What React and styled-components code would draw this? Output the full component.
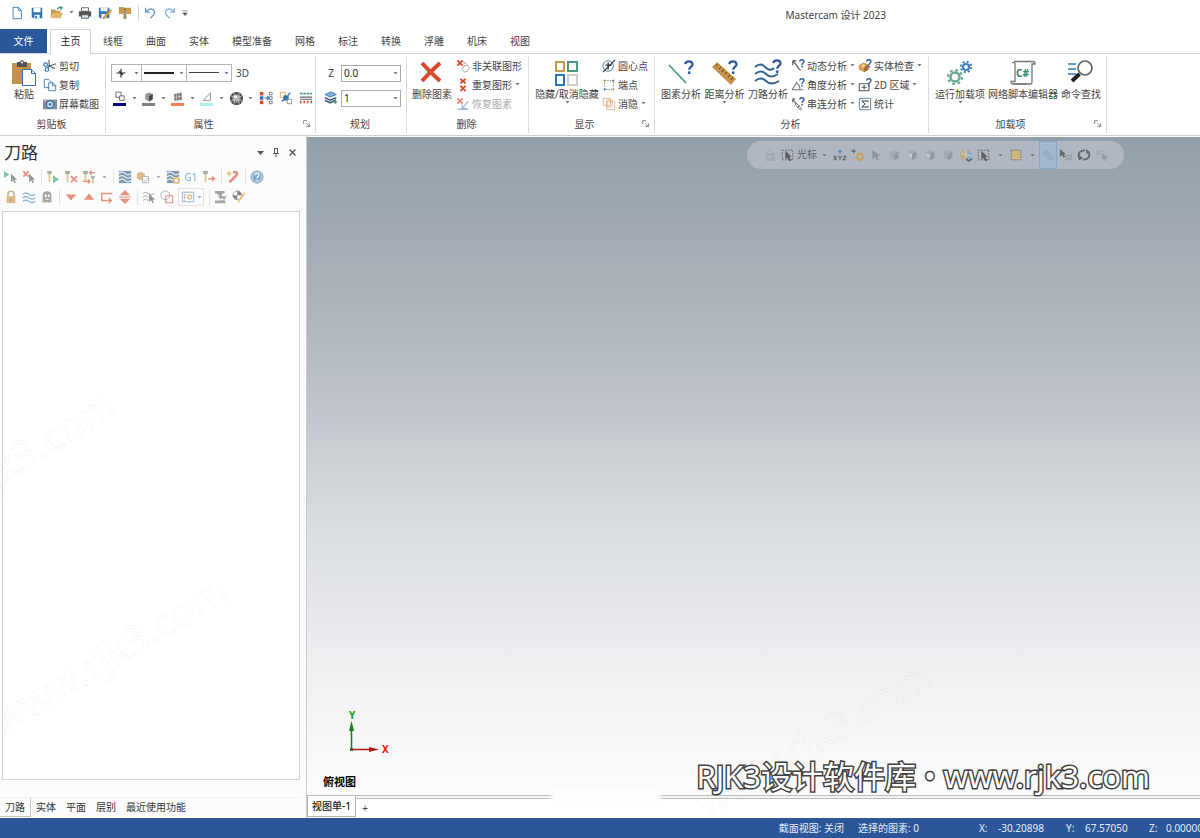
import React from 'react';
import styled, { createGlobalStyle } from 'styled-components';


const GlobalStyle = createGlobalStyle`
	* { box-sizing: border-box; }

	body {
		margin: 0;
		background: #fff;
		color: #444;
		font: 10px/14px "Noto Sans", "Noto Sans CJK SC", sans-serif;
	}

	button, select {
		font: inherit;
		color: inherit;
		margin: 0;
		padding: 0;
		border: 0;
		background: none;
	}
`;

const Page = styled.div`
	display: flex;
	flex-direction: column;
	height: 100vh;
	overflow: hidden;
	position: relative;
`;

const Svg = styled.svg`
	display: block;
	flex: none;
	width: ${p => p.$size}px;
	height: ${p => p.$size}px;
`;

const Separator = styled.span`
	flex: none;
	width: 1px;
	height: ${p => p.$tall || 16}px;
	margin: 0 ${p => p.$side || 2}px 0 3px;
	background: #d5d5d5;
`;

const ArrowBox = styled.span`
	flex: none;
	display: flex;
	align-items: center;
	justify-content: center;
	width: ${p => p.$width || 12}px;
`;

/* title bar */

const TitleBar = styled.header`
	flex: none;
	display: flex;
	align-items: center;
	height: 29px;
	padding: 0 314px 4px 7px;
`;

const QuickButton = styled.button`
	display: flex;
	align-items: center;
	justify-content: center;
	width: 20px;
	height: 20px;
`;

const Title = styled.h1`
	margin: 4px 0 0 auto;
	font-size: 10px;
	font-weight: 400;
	white-space: nowrap;
`;

/* ribbon */

const Tabs = styled.nav`
	flex: none;
	display: flex;
	height: 25px;
	border-bottom: 1px solid #d4d4d4;
`;

const FileTab = styled.button`
	width: 47px;
	margin-right: 3px;
	background: #2b579a;
	color: #fff;
`;

const HomeTab = styled.button`
	width: 41px;
	height: 25px;
	margin-right: 12px;
	padding-bottom: 2px;
	border: 1px solid #d4d4d4;
	border-bottom: 0;
	background: #fff;
	color: #222;
`;

const Tab = styled.button`
	margin-right: 23px;
	white-space: nowrap;
`;

const Ribbon = styled.section`
	flex: none;
	display: flex;
	height: 82px;
	border-bottom: 1px solid #d0d0d0;
`;

const GroupBox = styled.div`
	flex: none;
	display: flex;
	flex-direction: column;
	width: ${p => p.$width}px;
	margin: 2px 0;
	border-right: 1px solid #dcdcdc;
`;

const GroupBody = styled.div`
	display: flex;
	height: 61px;
	padding-left: ${p => p.$indent}px;
`;

const GroupFoot = styled.div`
	display: flex;
	align-items: center;
	padding-right: 2px;
`;

const GroupName = styled.span`
	flex: 1;
	text-align: center;
`;

const BigButton = styled.button`
	flex: none;
	display: flex;
	flex-direction: column;
	align-items: center;
	width: ${p => p.$width}px;
	padding-top: 3px;
	white-space: nowrap;
`;

const Column = styled.div`
	display: flex;
	flex-direction: column;
	align-items: flex-start;
	width: ${p => p.$width}px;
	padding-left: ${p => p.$indent || 0}px;
`;

const SmallButton = styled.button`
	display: flex;
	align-items: center;
	gap: 2px;
	height: 19px;
	color: ${p => (p.$faded ? '#aaa' : 'inherit')};
	white-space: nowrap;
`;

const AttributeGrid = styled.div`
	display: flex;
	flex-direction: column;
	gap: 7px;
	padding-top: 8px;
`;

const AttributeRow = styled.div`
	display: flex;
	align-items: center;
	height: 18px;
`;

const StyleButton = styled.button`
	display: flex;
	align-items: center;
	justify-content: space-between;
	width: ${p => p.$width}px;
	height: 18px;
	margin-right: -1px;
	padding-left: 2px;
	border: 1px solid #b5b5b5;
`;

const ThreeD = styled.button`
	margin-left: 5px;
`;

const SwatchButton = styled.button`
	display: flex;
	align-items: center;
	justify-content: flex-end;
	width: 29px;
`;

const Swatch = styled.span`
	display: flex;
	flex-direction: column;
	align-items: center;
	width: 13px;
	margin-right: 2px;

	&::after {
		content: '';
		width: 13px;
		height: 3px;
		background: ${p => p.$color};
	}
`;

const ToolButton = styled.button`
	display: flex;
	align-items: center;
	justify-content: center;
	width: 20px;
	height: 18px;
`;

const Field = styled.label`
	display: grid;
	grid-template-columns: 20px 60px;
	align-items: center;
	justify-items: center;
	height: 18px;
`;

const SelectWrap = styled.span`
	position: relative;
	width: 60px;
	height: 17px;
`;

const Select = styled.select`
	appearance: none;
	display: block;
	width: 100%;
	height: 17px;
	padding: 0 2px;
	border: 1px solid #ababab;
	border-radius: 0;
	background: #fff;
	color: #222;
	line-height: 14px;
`;

const SelectArrow = styled.span`
	position: absolute;
	top: 7px;
	right: 3px;
	display: flex;
	pointer-events: none;
`;

/* toolpath manager */

const Body = styled.main`
	flex: 1;
	display: flex;
	min-height: 0;
	background: #fcfcfc;
`;

const SidePanel = styled.aside`
	flex: none;
	display: flex;
	flex-direction: column;
	width: 307px;
	padding-top: 2px;
	border-right: 1px solid #c8ccd0;
`;

const PanelHeader = styled.div`
	display: flex;
	align-items: center;
	height: 29px;
	padding: 0 6px 0 4px;
`;

const PanelTitle = styled.h2`
	margin: 0 auto 0 0;
	color: #333;
	font-size: 17px;
	font-weight: 400;
	line-height: 24px;
`;

const PanelButton = styled.button`
	display: flex;
	align-items: center;
	justify-content: center;
	width: 16px;
	height: 16px;
`;

const IconRow = styled.div`
	display: flex;
	align-items: center;
	height: 20px;
	padding-left: 2px;
	opacity: 0.6;
`;

const IconButton = styled.button`
	flex: none;
	display: flex;
	align-items: center;
	justify-content: center;
	width: 18px;
	height: 18px;
	color: #2f75b5;
`;

const BoxedButton = styled.button`
	display: flex;
	align-items: center;
	width: 26px;
	height: 18px;
	margin: 0 2px;
	padding-left: 2px;
	border: 1px solid #d4d4d4;
`;

const Tree = styled.div`
	flex: 1;
	margin: 4px 6px 0 2px;
	border: 1px solid #d2d2d2;
	background: #fff;
`;

const PanelTabs = styled.nav`
	display: flex;
	height: 20px;
	margin: 17px 6px 1px 0;
	border-top: 1px solid #f0f0f0;
`;

const PanelTab = styled.button`
	padding: 0 5px;
	color: #333;
	border: solid ${p => (p.$active ? '#c4c4c4' : 'transparent')};
	border-width: 0 ${p => (p.$active ? 1 : 0)}px 1px 0;
`;

/* graphics view */

const Workspace = styled.section`
	flex: 1;
	display: flex;
	flex-direction: column;
	min-width: 0;
	position: relative;
`;

const Viewport = styled.div`
	flex: 1;
	position: relative;
	margin-top: 1px;
	background: linear-gradient(#939faa 0%, #abb2ba 24%, #bec3cc 40%, #cacfd3 48%, #dadde1 60%, #eeeff1 80%, #fcfcfc 100%);
`;

const SelectionBar = styled.div`
	position: absolute;
	top: 4px;
	right: 76px;
	display: flex;
	align-items: center;
	height: 28px;
	padding: 0 13px 0 14px;
	border-radius: 14px;
	background: #b0b7c0;
`;

const SelectionButton = styled.button`
	display: flex;
	align-items: center;
	justify-content: center;
	width: 18px;
	height: 28px;
	border: 1px solid ${p => (p.$active ? '#82a9cd' : 'transparent')};
	background: ${p => (p.$active ? '#a2b8cd' : 'none')};

	svg {
		opacity: ${p => p.$opacity || 0.6};
	}
`;

const CursorLabel = styled.span`
	margin-bottom: 2px;
	color: #59616a;
`;

const Gnomon = styled.div`
	position: absolute;
	left: 36px;
	bottom: 37px;
`;

const ViewName = styled.div`
	position: absolute;
	left: 16px;
	bottom: 6px;
	color: #000;
	font-size: 11px;
	font-weight: 700;
`;

const SheetBar = styled.nav`
	flex: none;
	display: flex;
	height: 23px;
	border-top: 1px solid #bdbdbd;
	background: linear-gradient(#f4f4f4 2px, #bdbdbd 2px, #bdbdbd 3px, #fff 3px);
`;

const SheetTab = styled.button`
	width: 49px;
	height: 21px;
	border: 1px solid #b5b5b5;
	border-top: 0;
	background: #fff;
	color: #222;
	font-weight: 500;
	white-space: nowrap;
`;

const AddSheet = styled.button`
	width: 18px;
	padding-top: 1px;
`;

const Smear = styled.div`
	position: absolute;
	left: 244px;
	bottom: 10px;
	width: 110px;
	height: 20px;
	border-radius: 4px;
	background: #fdfdfd;
	filter: blur(2px);
`;

const Credit = styled.div`
	position: absolute;
	right: 50px;
	bottom: 42px;
	color: #fff;
	font-size: 31px;
	line-height: 40px;
	white-space: nowrap;
	-webkit-text-stroke: 3px #414141;
	paint-order: stroke fill;
`;

const Ghost = styled.div`
	position: absolute;
	left: ${p => p.$left}px;
	top: ${p => p.$top}px;
	color: transparent;
	font-size: 40px;
	line-height: 48px;
	white-space: nowrap;
	-webkit-text-stroke: 1px rgba(120, 120, 120, 0.07);
	transform: rotate(-31deg);
	pointer-events: none;
`;

/* status bar */

const StatusBar = styled.footer`
	flex: none;
	display: flex;
	align-items: center;
	justify-content: flex-end;
	height: 20px;
	background: #2b579a;
	color: #e6ecf5;
	white-space: nowrap;
`;

const StatusItem = styled.span`
	margin-right: 14px;
`;

const Coordinate = styled.span`
	display: grid;
	grid-template-columns: ${p => p.$label || 19}px ${p => p.$width}px;
	margin-left: ${p => p.$gap}px;
`;


const blue = '#2f75b5';
const navy = '#2b579a';
const green = '#4a9b78';
const red = '#d9482b';
const gold = '#c79a4f';

const line = (color, width = 1) => ({ fill: 'none', stroke: color, strokeWidth: width });

const cursor = <path d="M8 4v10l2.400-2.200 1.600 3.400 1.600-.8-1.600-3.200H15z" fill="#555" />;
const smallX = <path d="M1.500 1.500l6 6M7.500 1.500l-6 6" {...line(red, 2)} />;
const waves = (color, y = 0) => (
	<path d={`M1 ${4 + y}q3.5-3 7 0t7 0M1 ${8 + y}q3.5-3 7 0t7 0M1 ${12 + y}q3.5-3 7 0t7 0`} {...line(color, 1.3)} />
);
const question = (x, y, s) => (
	<g transform={`translate(${x} ${y}) scale(${s})`}>
		<path d="M1 3.200Q1.200 1 3.800 1t2.800 2.300c0 1.800-2.600 2-2.600 4.200" {...line(navy, 1.7)} />
		<circle cx="4" cy="9.800" r="1.100" fill={navy} />
	</g>
);
const tool = (x = 0) => (
	<g transform={`translate(${x} 0)`}>
		<path d="M1 1h6L6 5H2z" fill="#777" />
		<path d="M4 5v9" {...line('#c9a544', 2)} />
	</g>
);
const gear = (x, y, r, color, width) => (
	<g>
		<circle cx={x} cy={y} r={r} {...line(color, width)} />
		<circle cx={x} cy={y} r={r + width} {...line(color, width * 0.9)} strokeDasharray={`${(r + width) * 0.393} ${(r + width) * 0.393}`} />
	</g>
);
const cube = (color, dark) => (
	<g>
		<path d="M3 4l5-2 5 2v7l-5 3-5-3z" fill={color} />
		<path d="M8 6.500l5-2.500v7l-5 3z" fill={dark} />
	</g>
);

const icons = {
	newFile: <path d="M3.500 1.500h6l3.500 3.500v9.500h-9.500zM9.500 1.500V5H13" fill="#fff" stroke={blue} />,
	save: <g><path d="M2 2h12v12H3.500L2 12.500z" fill={blue} /><path d="M4 2h8v5H4zM5 10h6v4H5z" fill="#fff" /><path d="M6 11h2v3H6z" fill={blue} /></g>,
	open: <g><path d="M1 4h5l1 1.500h5V8H4l-3 6z" fill={gold} /><path d="M4.500 8H15l-3 6H1.500z" fill="#e0b66d" /><path d="M8 4q2-3 5-2M11 .5l3 1.500-2 2.500" {...line(green, 1.5)} /></g>,
	print: <g><path d="M4 2h8v4H4z" fill="#fff" stroke="#555" /><path d="M1 6h14v6H1z" fill="#555" /><path d="M4 10h8v4H4z" fill="#d7e4f0" stroke="#555" /></g>,
	saveAs: <g><path d="M1 2h12v12H2.500L1 12.500z" fill={blue} /><path d="M3 2h8v4H3zM4 9h6v5H4z" fill="#fff" /><path d="M14 4l1.500 1.500-7 8-2.500 1 .8-2.600z" fill="#e4a33b" stroke="#8c6a30" strokeWidth=".6" /></g>,
	zip: <g><path d="M1 1h5l1 1h8v7H1z" fill={gold} /><path d="M6 6h4v9H6z" fill="#c9b78e" /><path d="M8 3v12" {...line('#555', 2)} strokeDasharray="1 1" /></g>,
	undo: <path d="M3 2v5h5M3.500 6.500Q8 1.500 12 4.500t-3.500 9.500" {...line('#6b9bd0', 1.6)} />,
	redo: <path d="M13 2v5H8M12.500 6.500Q8 1.500 4 4.500t3.500 9.500" {...line('#8bb4de', 1.6)} />,
	more: <path d="M4 4.500h8M4.500 8h7L8 12z" fill="#555" stroke="#555" />,
	paste: <g><path d="M2 4h19v21H2z" fill="#c3914a" /><path d="M7 3h3q.5-2 2-2t2 2h3v5H7z" fill="#555" /><circle cx="12" cy="3.500" r="1" fill="#fff" /><path d="M12.500 10.500h9l4 4v12h-13zM21.500 10.500v4h4" fill="#fff" stroke={blue} /></g>,
	cut: <g><path d="M6.500 1l1 7 6 3M15 5.500L7.500 8 5 10.500" {...line('#5c6670', 1.3)} /><circle cx="4.500" cy="12" r="2" {...line(blue, 1.3)} /><circle cx="3" cy="6.500" r="2" {...line(blue, 1.3)} /><path d="M5 7l3 1" {...line(blue)} /></g>,
	copy: <g fill="#fff" stroke={blue}><path d="M1.500 1.500h5l2.500 2.500v7H1.500z" /><path d="M6.500 5.500h5L14.500 8.500v6h-8zM11 5.500V9h3.500" /></g>,
	camera: <g><path d="M0 3h16v11H0z" fill="#858b91" /><path d="M1 4h3v1H1z" fill="#ddd" /><circle cx="8" cy="8.500" r="4" fill="#d8e6f3" stroke={blue} strokeWidth="1.500" /><circle cx="8" cy="8.500" r="1.600" fill={blue} /></g>,
	point: <path d="M8 3v10M3 8h10M6 6l4 4" {...line('#222', 1.3)} />,
	wireColor: <g fill="#fff" stroke="#444"><path d="M2.500 1.500h7v7h-7z" /><path d="M7.500 6.500h6v6h-6z" /></g>,
	solidColor: cube('#999', '#4a4a4a'),
	surfaceColor: <g><path d="M3 4l10-2v10l-10 1z" fill="#777" /><path d="M6 3.500v9M9.500 2.800v9.500M3 8.500L13 7" {...line('#ddd', .8)} /></g>,
	meshColor: <path d="M3 12.500L12.500 2.500v10z" {...line('#777')} />,
	material: <g><circle cx="8" cy="8" r="7" fill="#4b4b4b" /><circle cx="8" cy="8" r="4.500" fill="#999" /><path d="M2 5q6 4 12 0M2 11q6-4 12 0M5 2q3 6 0 12M11 2q-3 6 0 12" {...line('#ddd', .7)} /><circle cx="7" cy="6" r="1.800" fill="#eee" /></g>,
	setAll: <g><path d="M1 1h4v4H1z" fill={red} /><path d="M1 6h4v4H1z" fill={blue} /><path d="M1 11h4v4H1z" fill={red} /><path d="M6 8h5M9 5.500L11.500 8 9 10.500" {...line(blue, 1.3)} /><path d="M12 1.500h3v3h-3zM12 6.500h3v3h-3zM12 11.500h3v3h-3z" {...line('#777')} /></g>,
	setFrom: <g><path d="M1.500 1.500h6v6h-6z" {...line('#e3a24c')} /><path d="M5 5h6v6H5z" fill={blue} /><path d="M3 12l3-3M10 5l3-3" {...line(blue, 1.5)} /><path d="M9.500 9.500h5v5h-5z" fill="#fff" stroke="#888" /></g>,
	levels: <g><path d="M1 7h14M1 9.500h14" {...line('#666', 1.2)} /><path d="M1 3h14" {...line(green, 2)} strokeDasharray="3 1" /><path d="M2 11v3M6 11v3M10 11v3M14 11v3" {...line(red, 1.8)} /></g>,
	layers: <g><path d="M1 4l7-3 6 3-7 3z" fill="#86aed4" stroke={blue} /><path d="M1 7.500l6 3 7-3M1 10.500l6 3 6-3" {...line('#455f7b', 1.8)} /><path d="M13 7v7M11 12l2 2 2-2" {...line(green, 1.3)} /></g>,
	bigX: <path d="M4 4q8 9 18 18M22 4Q13 12 4 22" {...line(red, 4)} />,
	nonAssoc: <g>{smallX}<path d="M9 8l4-1 2 3-2 4-4 1-2-3z" {...line('#777')} strokeDasharray="2 1" /><path d="M8 3l4 3" {...line('#777')} /></g>,
	duplicates: <path d="M5 1l6 5M11 1L5 6M5 9l6 6M11 9l-6 6" {...line(red, 2)} />,
	restore: <g opacity=".65">{smallX}<path d="M14 5L7 13M7 8.500V13h5M2 14h12" {...line('#6994c5', 1.5)} /></g>,
	squares: <g fill="#fff" strokeWidth="2"><path d="M3 3h8v9H3z" stroke={gold} /><path d="M15 3h9v9h-9z" stroke={green} /><path d="M3 16h8v10H3z" stroke={blue} /><path d="M15 16h9v10h-9z" stroke="#c9ced3" /></g>,
	centerPoint: <g><circle cx="7" cy="8" r="6" {...line(blue)} /><path d="M1 15L15 1" {...line('#333', 1.4)} /><path d="M4 7h7M7 4v8" {...line('#333', 1.5)} /></g>,
	endPoints: <g><path d="M3 3h10v10H3z" {...line('#666')} strokeDasharray="1.500 1.500" /><path d="M2 2h2v2H2zM12 12h2v2h-2z" fill="#e38b2c" /><path d="M12 2h2v2h-2zM2 12h2v2H2z" fill={blue} /></g>,
	blank: <g {...line('#e2ae85')}><path d="M1.500 1.500h8v8h-8zM5.500 5.500h9v9h-9zM5.500 3.500h6v8h-6z" /></g>,
	lineQ: <g><path d="M2 6l17 18" {...line(green, 1.7)} />{question(17, 1, 1.3)}</g>,
	rulerQ: <g><path d="M1 8l5-5 19 17-5 6z" fill="#c3914a" /><path d="M7 5l-2 2M10 8l-2 2M13 10l-2 3M16 13l-2 2M19 16l-2 2M22 18l-2 3" {...line('#5f451e')} />{question(17, 1, 1.3)}</g>,
	wavesQ: <g><path d="M1 8q6-5 10 0 5 5 9 1M1 15q6-5 11 0t12 0M1 22q6-5 11 0t13 0" {...line('#33658f', 2)} />{question(18, 0, 1.3)}</g>,
	dynamicQ: <g><path d="M2 2l6 7M2 2v5M2 2h4M7 9l4 4" {...line('#666', 1.5)} />{question(9, 0, .9)}</g>,
	angleQ: <g><path d="M7 4L1.500 13.500H14M6 6q5 2 4 7" {...line('#777', 1.2)} />{question(9, 0, .9)}</g>,
	chainQ: <g><path d="M2 2l4 6M2 2v4M2 2h3" {...line('#666', 1.3)} /><path d="M6 7l3 3-1 2-3-3zM9 10l3 3-1 2-3-3z" {...line('#666', 1.1)} />{question(9, 0, .9)}</g>,
	solidQ: <g><path d="M1 7l5-3 6 2v6l-5 3-6-3z" fill="#d69a4b" /><path d="M7 9l5-3v6l-5 3z" fill="#a46e2d" /><circle cx="6" cy="8" r="2" fill="#f4d7a8" />{question(9, 0, .9)}</g>,
	areaQ: <g><path d="M1.500 6.500h11v8h-11zM4 10.500h6M7 8v5" {...line('#555', 1.2)} />{question(9, 0, .9)}</g>,
	sigma: <g><path d="M1.500 1.500h13v13h-13z" {...line('#4c7aa6')} /><path d="M11.500 6V4.500h-7L8 8l-3.500 3.500h7V10" {...line('#333', 1.1)} /></g>,
	gears: <g>{gear(9, 18, 4.500, '#67ab94', 2.5)}{gear(20, 8, 3, '#4380bd', 2.2)}</g>,
	script: <g><path d="M5 2.500h19q2 0 2 2.500h-3v18q0 2-2 2H4q-2 0-2-2.500h4V5Q6 2.500 3 4" fill="#fff" stroke="#777" strokeWidth="1.300" /><path d="M4 25h14" {...line('#777', 1.3)} /><text x="7" y="18" fill="#2e8464" fontSize="10" fontWeight="700">C#</text></g>,
	finder: <g><circle cx="18" cy="9" r="7" fill="#fff" stroke="#666" strokeWidth="1.700" /><path d="M12.500 15L5 22" {...line('#222', 4)} /><path d="M1 5h8M1 10h8M1 15h8" {...line(blue, 1.6)} /></g>,
	launcher: <path d="M3.500 8V3.500H8M7 7l4 4M11.500 7v4.500H7" {...line('#666')} />,

	runCursor: <g><path d="M0 1v8l6-4z" fill="#2f9c70" />{cursor}</g>,
	clearCursor: <g>{smallX}{cursor}</g>,
	toolRun: <g>{tool()}<path d="M8 6v9l7-4.500z" fill="#2f9c70" /></g>,
	toolX: <g>{tool()}<path d="M8 7l7 7M15 7l-7 7" {...line(red, 2)} /></g>,
	toolSwap: <g>{tool()}<path d="M8 3h7M11 .5L8.500 3 11 5.500M1 13h8M6.500 10.500L9 13l-2.500 2.500" {...line(red, 1.5)} /><path d="M10 7h5l-1 3h-3z" fill="#666" /><path d="M12.500 10v5" {...line('#c9a544', 2)} /></g>,
	waveBox: <g><path d="M1 1h14v14H1z" fill="#2c5877" />{waves('#d4e5ed')}</g>,
	solidBox: <g><path d="M1 4l4-2 5 2v6l-4 2-5-2z" fill="#cf8e40" /><path d="M7.500 7.500h7v7h-7zM9 11l2 2 3-4" fill="#fff" stroke="#777" /></g>,
	waveGear: <g><path d="M1 1h14v14H1z" fill="#2c5877" />{waves('#d4e5ed')}<circle cx="12" cy="12" r="3" fill="#fff" stroke="#df9b24" strokeWidth="2" /></g>,
	toolArrow: <g>{tool()}<path d="M7 10h7M11.500 7.500L14.500 10l-3 2.500" {...line(red, 1.5)} /></g>,
	wizard: <g><path d="M4 14l8-8q1.500-2-.5-3.500H8" {...line(red, 3)} /><path d="M3.500 1v6M.5 4h6" {...line('#df9b24', 1.8)} /></g>,
	help: <g><circle cx="8" cy="8" r="7" fill={blue} stroke="#5a7590" /><circle cx="8" cy="8" r="5.500" {...line('#dce8f4', .8)} /><path d="M5.800 6Q6 4 8 4t2.200 2C10.200 7.500 8 7.600 8 9.500M8 11v1.500" {...line('#fff', 1.4)} /></g>,
	lock: <g><path d="M4.500 8V5q0-3.500 3.500-3.500T11.500 5v3" {...line('#a68444', 1.8)} /><path d="M3 7h10v8H3z" fill="#cc9337" /><path d="M8 9v4" {...line('#704a16')} /></g>,
	waves: waves(blue, 1),
	ghost: <g><path d="M3 15V6q0-4.500 5-4.500T13 6v9l-2-2-1.500 2L8 13l-1.500 2L5 13z" fill="#6c6c6c" /><path d="M5.500 5h2v3h-2zM9 5h2v3H9zM6 10h4v1H6z" fill="#fff" /></g>,
	down: <path d="M2 5h12l-6 7z" fill={red} />,
	up: <path d="M2 11h12L8 4z" fill={red} />,
	insert: <path d="M14 4H2v8h10M10 9l3 3-3 3" {...line(red, 1.6)} />,
	split: <path d="M2 6h12L8 0zM2 10h12l-6 6zM1 7.500h14v1H1z" fill={red} />,
	waveCursor: <g><path d="M1 4q3-3 6 0t7 0M1 8q3-3 6 0M1 12q3-3 6 0" {...line('#527181')} />{cursor}</g>,
	boundary: <g><circle cx="6" cy="6" r="5" {...line('#777')} /><path d="M6.500 6.500h8v8h-8z" {...line(red, 1.2)} /></g>,
	listGear: <g><path d="M1.500 2.500h13v11h-13z" {...line(blue)} /><path d="M4 5v7" {...line('#333', 1.5)} strokeDasharray="1.500 1.500" /><circle cx="10" cy="8" r="2.200" {...line('#df9b24', 1.7)} /></g>,
	machine: <g><path d="M1 1h11v3H9v3h4v3H7L4 7h3L3 4H1zM1 12h12v3H1z" fill="#626a72" /><path d="M8 11l2 2 5-7" {...line('#777')} /></g>,
	target: <g><circle cx="6" cy="6" r="5" fill="#fff" stroke="#555" /><path d="M6 1a5 5 0 0 1 5 5H6zM6 11a5 5 0 0 1-5-5h5z" fill="#333" /><path d="M14.500 3.500L7 14" {...line('#df9b24', 2)} /></g>,

	padlock: <g><path d="M5 7V4.500Q5 2 8 2t3 2.500V7" {...line('#777')} /><path d="M3.500 7h9v7h-9z" fill="#999" stroke="#777" /><path d="M5 10h6" {...line('#ddd')} /></g>,
	boxCursor: <g><path d="M1.500 2.500h12v11h-12z" {...line('#333')} strokeDasharray="2 1" /><path d="M5 3v10l2.500-2 2 4 2-1-2-4H12z" fill="#222" /></g>,
	xyz: <g><path d="M8 1v6M5.500 4H10.500" {...line(blue, 1.5)} /><path d="M1 9l3 5M4 9l-3 5M6 9l2 2.500L10 9M8 11.500V14M11.500 9.500h3L11.500 13.500h3.500" {...line('#333', 1.2)} /></g>,
	plusGear: <g><path d="M3 1v5M.5 3.500h5" {...line('#333', 1.3)} /><circle cx="10" cy="10" r="3.500" {...line('#d59a25', 2.5)} /></g>,
	plainCursor: <path d="M4 2v11l3-3 2 4 2-1-2-4h4z" fill="#4a525c" />,
	paleCube: cube('#8d959e', '#5d656e'),
	paleFace: <g>{cube('#8d959e', '#5d656e')}<path d="M4 6l4 1.500v4L4 10z" fill="#eceff2" /></g>,
	globe: <g><circle cx="8" cy="8" r="6.500" fill="#78a7d2" /><path d="M8 1.500a6.500 6.500 0 0 0 0 13z" fill="#d6a551" /><path d="M8 2v12M3 6l10 3" {...line('#eee')} /><path d="M8 12l3 3 4-3" {...line('#333', 2)} /></g>,
	yellowBox: <path d="M2.500 2.500h11v11h-11z" fill="#e8b752" stroke="#444" strokeDasharray="2 1" />,
	twoSpheres: <g fill="#8ea1b4" stroke="#7890a7"><circle cx="6" cy="6" r="3.500" /><circle cx="11" cy="11" r="3" /></g>,
	verifyCursor: <g><path d="M1 1v9l2.500-2L5 11l2-1-1.500-3H8z" fill="#333" /><path d="M8 8.500h6v5H8zM9 11l2 1.500L15 7" {...line('#76917f')} /></g>,
	rotate: <g><path d="M3 12Q0 6 5 3.500l4-1M13 4q3 6-2 8.500l-4 1" {...line('#333', 2)} /><path d="M2 7v7l5-2zM10 1l4 3-3 3z" fill="#333" /></g>,
	undoCursor: <g><path d="M2 2v5h5M3 6q4-5 8-1" {...line('#777')} /><path d="M8 6v8l2-2 2 3 1.500-1L12 11h3z" fill="#5b636b" /></g>,
};

const Icon = ({ name, size = 14, box = 16 }) => (
	<Svg $size={size} viewBox={`0 0 ${box} ${box}`} aria-hidden="true">{icons[name]}</Svg>
);

const Triangle = () => (
	<svg width="5" height="3" viewBox="0 0 5 3" aria-hidden="true"><path d="M.5 0h4L2.500 2.500z" fill="#777" /></svg>
);

const Arrow = ({ width }) => <ArrowBox $width={width}><Triangle /></ArrowBox>;

const Big = ({ icon, label, width, menu }) => (
	<BigButton $width={width}>
		<Icon name={icon} size={28} box={28} />
		<span>{label}</span>
		{menu && <Arrow />}
	</BigButton>
);

const Small = ({ icon, label, menu, faded }) => (
	<SmallButton $faded={faded}>
		<Icon name={icon} />
		<span>{label}</span>
		{menu && <Arrow width={6} />}
	</SmallButton>
);

const Group = ({ name, width, indent, launcher, children }) => (
	<GroupBox $width={width}>
		<GroupBody $indent={indent}>{children}</GroupBody>
		<GroupFoot>
			<GroupName>{name}</GroupName>
			{launcher && <button aria-label={name}><Icon name="launcher" size={12} /></button>}
		</GroupFoot>
	</GroupBox>
);

const Combo = ({ label, name, value }) => (
	<Field>
		{label}
		<SelectWrap>
			<Select aria-label={name} defaultValue={value}><option>{value}</option></Select>
			<SelectArrow><Triangle /></SelectArrow>
		</SelectWrap>
	</Field>
);

const swatches = [
	['wireColor', '#000080', '线框颜色'],
	['solidColor', '#808080', '实体颜色'],
	['surfaceColor', '#ff7f50', '曲面颜色'],
	['meshColor', '#afeeee', '网格颜色'],
];

const tabs = ['线框', '曲面', '实体', '模型准备', '网格', '标注', '转换', '浮雕', '机床', '视图'];

// '|' is a separator, 'v' a menu arrow
const topIcons = ['runCursor', 'clearCursor', '|', 'toolRun', 'toolX', 'toolSwap', 'v', '|', 'waveBox', 'solidBox', 'v', 'waveGear', 'G1', 'toolArrow', '|', 'wizard', '|', 'help'];
const bottomIcons = ['lock', 'waves', 'ghost', '|', 'down', 'up', 'insert', 'split', '|', 'waveCursor', 'boundary', 'box', '|', 'machine', 'target'];
const pickIcons = ['xyz', 'plusGear', 'plainCursor', 'paleCube', 'paleFace', 'paleFace', 'paleCube', 'globe', 'boxCursor', 'v', 'yellowBox', 'v', 'twoSpheres', 'verifyCursor', 'rotate', 'undoCursor'];
const faint = ['plainCursor', 'paleCube', 'paleFace', 'twoSpheres', 'undoCursor'];

const PanelIcons = ({ list }) => (
	<IconRow>
		{list.map((name, i) => {
			if (name === '|') return <Separator key={i} />;
			if (name === 'v') return <Arrow key={i} />;
			if (name === 'G1') return <IconButton key={i}>G1</IconButton>;
			if (name === 'box') return <BoxedButton key={i} aria-label={name}><Icon name="listGear" /><Arrow width={8} /></BoxedButton>;
			return <IconButton key={i} aria-label={name}><Icon name={name} /></IconButton>;
		})}
	</IconRow>
);

const App = () => (
	<Page>
		<GlobalStyle />
		<TitleBar>
			{['newFile', 'save', 'open'].map(name => <QuickButton key={name} aria-label={name}><Icon name={name} /></QuickButton>)}
			<Arrow width={8} />
			{['print', 'saveAs', 'zip'].map(name => <QuickButton key={name} aria-label={name}><Icon name={name} /></QuickButton>)}
			<Separator $side={1} />
			{['undo', 'redo'].map(name => <QuickButton key={name} aria-label={name}><Icon name={name} /></QuickButton>)}
			<button aria-label="more"><Icon name="more" size={10} /></button>
			<Title>Mastercam 设计 2023</Title>
		</TitleBar>

		<Tabs>
			<FileTab>文件</FileTab>
			<HomeTab>主页</HomeTab>
			{tabs.map(tab => <Tab key={tab}>{tab}</Tab>)}
		</Tabs>

		<Ribbon>
			<Group name="剪贴板" width={106} indent={5}>
				<Big icon="paste" label="粘贴" width={38} />
				<Column>
					<Small icon="cut" label="剪切" />
					<Small icon="copy" label="复制" />
					<Small icon="camera" label="屏幕截图" />
				</Column>
			</Group>

			<Group name="属性" width={210} indent={5} launcher>
				<AttributeGrid>
					<AttributeRow>
						<StyleButton $width={31} aria-label="点样式"><Icon name="point" /><Arrow width={10} /></StyleButton>
						<StyleButton $width={46} aria-label="线型">
							<svg width="30" height="2"><path d="M0 1h30" stroke="#222" strokeWidth="2" /></svg>
							<Arrow width={10} />
						</StyleButton>
						<StyleButton $width={46} aria-label="线宽">
							<svg width="30" height="2"><path d="M0 .5h30" stroke="#444" /></svg>
							<Arrow width={10} />
						</StyleButton>
						<ThreeD>3D</ThreeD>
					</AttributeRow>
					<AttributeRow>
						{swatches.map(([icon, color, label]) => (
							<SwatchButton key={icon} aria-label={label}>
								<Swatch $color={color}><Icon name={icon} size={12} /></Swatch>
								<Arrow />
							</SwatchButton>
						))}
						<SwatchButton aria-label="材料"><Icon name="material" size={15} /><Arrow /></SwatchButton>
						{['setAll', 'setFrom', 'levels'].map(name => <ToolButton key={name} aria-label={name}><Icon name={name} /></ToolButton>)}
					</AttributeRow>
				</AttributeGrid>
			</Group>

			<Group name="规划" width={91} indent={5}>
				<AttributeGrid>
					<Combo label="Z" name="Z" value="0.0" />
					<Combo label={<Icon name="layers" />} name="层别" value="1" />
				</AttributeGrid>
			</Group>

			<Group name="删除" width={122} indent={4}>
				<Big icon="bigX" label="删除图素" width={42} />
				<Column $indent={3}>
					<Small icon="nonAssoc" label="非关联图形" />
					<Small icon="duplicates" label="重复图形" menu />
					<Small icon="restore" label="恢复图素" faded />
				</Column>
			</Group>

			<Group name="显示" width={126} indent={4} launcher>
				<Big icon="squares" label="隐藏/取消隐藏" width={68} menu />
				<Column $indent={1}>
					<Small icon="centerPoint" label="圆心点" />
					<Small icon="endPoints" label="端点" />
					<Small icon="blank" label="消隐" menu />
				</Column>
			</Group>

			<Group name="分析" width={274} indent={4}>
				<Big icon="lineQ" label="图素分析" width={44} />
				<Big icon="rulerQ" label="距离分析" width={43} menu />
				<Big icon="wavesQ" label="刀路分析" width={44} />
				<Column $width={68} $indent={1}>
					<Small icon="dynamicQ" label="动态分析" menu />
					<Small icon="angleQ" label="角度分析" menu />
					<Small icon="chainQ" label="串连分析" menu />
				</Column>
				<Column>
					<Small icon="solidQ" label="实体检查" menu />
					<Small icon="areaQ" label="2D 区域" menu />
					<Small icon="sigma" label="统计" />
				</Column>
			</Group>

			<Group name="加载项" width={178} indent={4} launcher>
				<Big icon="gears" label="运行加载项" width={54} menu />
				<Big icon="script" label="网络脚本编辑器" width={72} />
				<Big icon="finder" label="命令查找" width={44} />
			</Group>
		</Ribbon>

		<Body>
			<SidePanel>
				<PanelHeader>
					<PanelTitle>刀路</PanelTitle>
					<PanelButton aria-label="菜单"><svg width="7" height="4"><path d="M0 0h7L3.500 4z" fill="#555" /></svg></PanelButton>
					<PanelButton aria-label="固定"><svg width="8" height="9"><path d="M2.500 0v5M2 .5h4M5.500 0v5M1 5.500h6M4 5v4" {...line('#555')} /></svg></PanelButton>
					<PanelButton aria-label="关闭"><svg width="7" height="7"><path d="M.5.5l6 6M6.500.5l-6 6" {...line('#555', 1.3)} /></svg></PanelButton>
				</PanelHeader>
				<PanelIcons list={topIcons} />
				<PanelIcons list={bottomIcons} />
				<Tree />
				<PanelTabs>
					{['刀路', '实体', '平面', '层别', '最近使用功能'].map((name, i) => <PanelTab key={name} $active={i === 0}>{name}</PanelTab>)}
				</PanelTabs>
			</SidePanel>

			<Workspace>
				<Viewport>
					<SelectionBar>
						<SelectionButton $opacity={0.3} aria-label="锁定"><Icon name="padlock" /></SelectionButton>
						<SelectionButton aria-label="选择"><Icon name="boxCursor" /></SelectionButton>
						<CursorLabel>光标</CursorLabel>
						<Arrow width={14} />
						{pickIcons.map((name, i) => (
							name === 'v'
								? <Arrow key={i} width={14} />
								: (
									<SelectionButton key={i} aria-label={name} $active={name === 'twoSpheres'} $opacity={faint.includes(name) ? 0.35 : 0.6}>
										<Icon name={name} />
									</SelectionButton>
								)
						))}
					</SelectionBar>
					<Gnomon>
						<svg width="50" height="52" viewBox="0 -6 50 52">
							<path d="M8.500 40V16" stroke="#1c7a1c" strokeWidth="1.500" />
							<path d="M6 22l2.500-10L11 22z" fill="#128012" />
							<path d="M8 40.500h22" stroke="#b01818" strokeWidth="1.500" />
							<path d="M26 38l10 2.500L26 43z" fill="#b01010" />
							<path d="M7 39h3v3H7z" fill="#555" />
							<text x="6" y="10" fill="#12a012" fontSize="10" fontWeight="700">Y</text>
							<text x="39" y="44" fill="#ee1515" fontSize="10" fontWeight="700">X</text>
						</svg>
					</Gnomon>
					<ViewName>俯视图</ViewName>
				</Viewport>
				<SheetBar>
					<SheetTab>视图单-1</SheetTab>
					<AddSheet aria-label="添加">+</AddSheet>
				</SheetBar>
				<Smear />
			</Workspace>
		</Body>

		<StatusBar>
			<StatusItem>截面视图: 关闭</StatusItem>
			<StatusItem>选择的图素: 0</StatusItem>
			<Coordinate $gap={46} $width={46}><span>X:</span><span>-30.20898</span></Coordinate>
			<Coordinate $gap={22} $width={42}><span>Y:</span><span>67.57050</span></Coordinate>
			<Coordinate $gap={22} $label={17} $width={34}><span>Z:</span><span>0.00000</span></Coordinate>
		</StatusBar>

		<Ghost $left={-135} $top={445} aria-hidden="true">www.rjk3.com</Ghost>
		<Ghost $left={-24} $top={630} aria-hidden="true">www.rjk3.com</Ghost>
		<Ghost $left={680} $top={715} aria-hidden="true">www.rjk3.com</Ghost>
		<Credit>RJK3设计软件库 • www.rjk3.com</Credit>
	</Page>
);

export default App;
